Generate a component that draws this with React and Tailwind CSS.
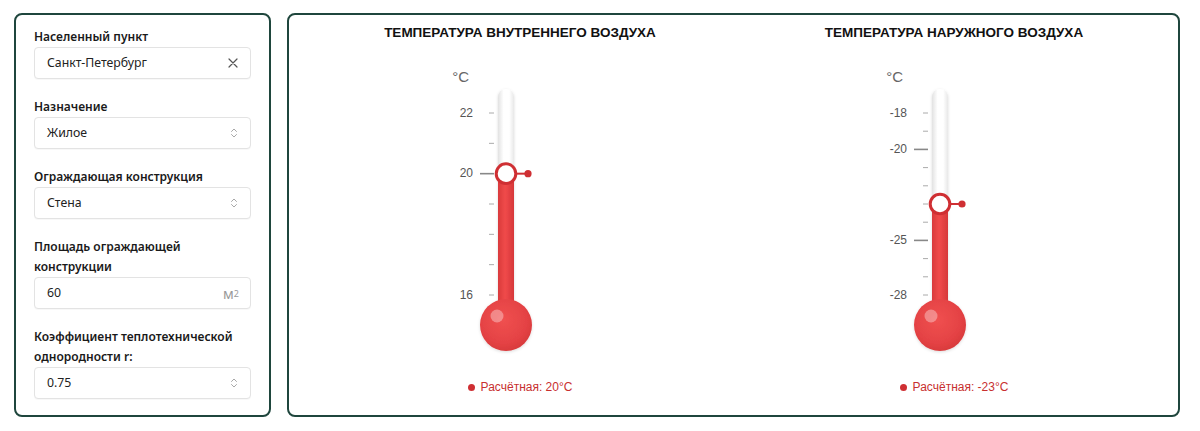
import React from "react";

const FONT = { fontFamily: '"Noto Sans", "Open Sans", sans-serif' };
const ARIAL = { fontFamily: '"Liberation Sans", Arial, sans-serif' };

function Chevrons() {
  return (
    <svg width="8" height="12" viewBox="0 0 8 12" fill="none" stroke="#a8a8a8" strokeWidth="1" strokeLinecap="round" strokeLinejoin="round">
      <path d="M1.5 4.5 L4 2 L6.5 4.5" />
      <path d="M1.5 7.5 L4 10 L6.5 7.5" />
    </svg>
  );
}

function Cross() {
  return (
    <svg width="10" height="10" viewBox="0 0 10 10" fill="none" stroke="#555" strokeWidth="1.2" strokeLinecap="round">
      <path d="M1 1 L9 9 M9 1 L1 9" />
    </svg>
  );
}

function Field({ label, value, right }) {
  return (
    <div className="flex flex-col">
      <div className="text-[12px] leading-5 font-semibold text-[#1a1a1a]">{label}</div>
      <div className="h-8 flex items-center justify-between rounded border border-[#e3e3e3] bg-white pl-3 pr-[12px] shadow-[0_1px_1px_rgba(0,0,0,0.03)]">
        <span className="text-[12.3px] text-[#222]">{value}</span>
        <span className="flex items-center">{right}</span>
      </div>
    </div>
  );
}

function Thermometer({ id, min, max, value, labels, major }) {
  const top = 72;
  const span = 182;
  const cx = 86;
  const yOf = (v) => top + ((max - v) / (max - min)) * span;
  const vals = [];
  for (let v = max; v >= min; v--) vals.push(v);
  const my = yOf(value);
  return (
    <svg width="200" height="320" viewBox="0 0 200 320" style={ARIAL}>
      <defs>
        <linearGradient id={id + "tube"} x1="0" x2="1" y1="0" y2="0">
          <stop offset="0" stopColor="#e2e2e2" />
          <stop offset="0.35" stopColor="#ffffff" />
          <stop offset="0.7" stopColor="#ffffff" />
          <stop offset="1" stopColor="#e8e8e8" />
        </linearGradient>
        <linearGradient id={id + "red"} x1="0" x2="1" y1="0" y2="0">
          <stop offset="0" stopColor="#d93a3c" />
          <stop offset="0.45" stopColor="#f04a4a" />
          <stop offset="1" stopColor="#d6383a" />
        </linearGradient>
        <radialGradient id={id + "bulb"} cx="0.45" cy="0.4" r="0.65">
          <stop offset="0" stopColor="#f05050" />
          <stop offset="0.7" stopColor="#e44244" />
          <stop offset="1" stopColor="#d5383a" />
        </radialGradient>
        <filter id={id + "sh"} x="-50%" y="-20%" width="200%" height="140%">
          <feDropShadow dx="0" dy="1" stdDeviation="1.5" floodColor="#000" floodOpacity="0.14" />
        </filter>
      </defs>
      <text x={cx - 37} y={37} textAnchor="end" dominantBaseline="middle" fontSize="15" fill="#666">°C</text>
      {vals.map((v) => {
        const y = yOf(v);
        const isMajor = v % major === 0;
        return (
          <g key={v}>
            <line
              x1={isMajor ? cx - 26 : cx - 17}
              x2={cx - 12}
              y1={y}
              y2={y}
              stroke={isMajor ? "#888" : "#aaa"}
              strokeWidth={isMajor ? 1.6 : 1}
            />
            {labels.includes(v) && (
              <text x={cx - 33} y={y + 0.5} textAnchor="end" dominantBaseline="middle" fontSize="12" fill="#555">
                {v}
              </text>
            )}
          </g>
        );
      })}
      <g filter={`url(#${id}sh)`}>
        <rect x={cx - 8} y={48} width={16} height={240} rx={8} fill={`url(#${id}tube)`} />
        <rect x={cx - 8} y={my} width={16} height={284 - my} fill={`url(#${id}red)`} />
        <circle cx={cx} cy={284} r={26} fill={`url(#${id}bulb)`} />
      </g>
      <circle cx={cx - 9} cy={275} r={6.5} fill="#ffffff" fillOpacity="0.35" />
      <line x1={cx + 10} x2={cx + 22} y1={my} y2={my} stroke="#cf2f33" strokeWidth="2" />
      <circle cx={cx + 22} cy={my} r={3.6} fill="#cf2f33" />
      <circle cx={cx} cy={my} r={9.8} fill="#fff" stroke="#cf2f33" strokeWidth="3" />
    </svg>
  );
}

function Column({ title, id, min, max, value, labels }) {
  return (
    <div className="w-[434px] flex flex-col items-center pt-[10px]">
      <div className="text-[13.5px] leading-4 font-bold text-[#111] uppercase" style={ARIAL}>{title}</div>
      <Thermometer id={id} min={min} max={max} value={value} labels={labels} major={5} />
      <div className="mt-[18px] flex items-center gap-[6px] text-[12px] leading-4 text-[#c8302f]" style={ARIAL}>
        <span className="w-[7px] h-[7px] rounded-full bg-[#cf2f33]" />
        <span>Расчётная: {value}°C</span>
      </div>
    </div>
  );
}

export default function App() {
  return (
    <div className="flex gap-4 pt-[13px] pl-[14px] h-[431px] bg-white" style={FONT}>
      <div className="w-[257px] h-[404px] shrink-0 rounded-lg border-2 border-[#1f463d] pt-3 px-[18px] flex flex-col gap-[18px]">
        <Field label="Населенный пункт" value="Санкт-Петербург" right={<Cross />} />
        <Field label="Назначение" value="Жилое" right={<Chevrons />} />
        <Field label="Ограждающая конструкция" value="Стена" right={<Chevrons />} />
        <Field
          label={<>Площадь ограждающей<br />конструкции</>}
          value="60"
          right={<span className="text-[14px] text-[#9a9a9a] relative -right-[1px]">м<sup className="text-[9px] relative -top-[2px]">2</sup></span>}
        />
        <Field label={<>Коэффициент теплотехнической<br />однородности r:</>} value="0.75" right={<Chevrons />} />
      </div>
      <div className="w-[893px] h-[404px] shrink-0 rounded-lg border-2 border-[#1f463d] pl-[14px] flex">
        <Column title="Температура внутреннего воздуха" id="in" min={16} max={22} value={20} labels={[22, 20, 16]} />
        <Column title="Температура наружного воздуха" id="out" min={-28} max={-18} value={-23} labels={[-18, -20, -25, -28]} />
      </div>
    </div>
  );
}
